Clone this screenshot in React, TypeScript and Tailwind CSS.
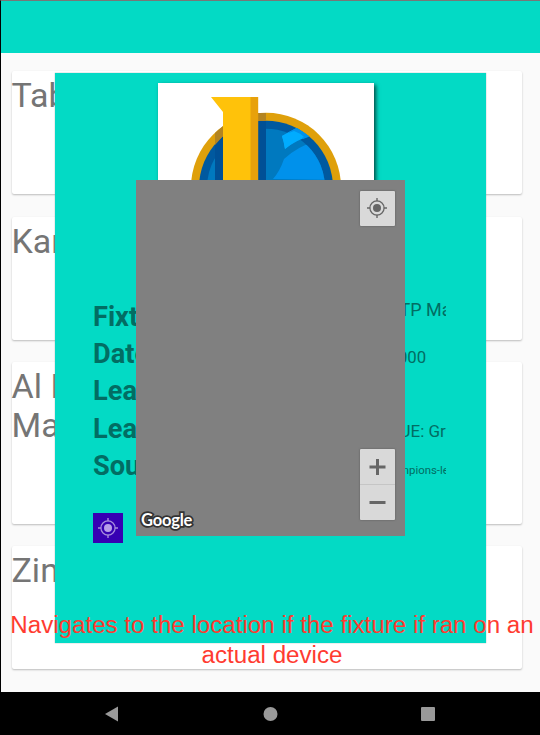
import React from "react";

const cards = [
  { title: "Tab", height: "h-[123px]" },
  { title: "Kara", height: "h-[123px]" },
  { title: "Al Hilal\nMadrid", height: "h-[161.5px]" },
  { title: "Zinda", height: "h-[123px]" },
];

const rows = [
  { label: "Fixture", value: "TP Maz", style: "text-[18px] pb-[15px] pl-[1.5px]" },
  { label: "Date", value: "2000", style: "text-[16.8px] pt-[4px] -ml-[9.5px]" },
  { label: "League", value: "", style: "" },
  { label: "League", value: "UE: Gro", style: "text-[17px] pt-[4px] pl-[1.5px]" },
  { label: "Source", value: "mpions-league", style: "text-[11.4px] pt-[8px] pl-[1px]" },
];

function Target({ ring, dot }: { ring: string; dot: string }) {
  return (
    <svg width="22" height="22" viewBox="0 0 22 22" fill="none">
      <circle cx="11" cy="11" r="7.1" stroke={ring} strokeWidth="1.25" />
      <path d="M11 1v3.2M11 17.8V21M1 11h3.2M17.8 11H21" stroke={ring} strokeWidth="1.4" />
      <circle cx="11" cy="11" r="4" fill={dot} />
    </svg>
  );
}

function Emblem() {
  return (
    <svg width="216" height="97" viewBox="158 83 216 97" className="block">
      <defs>
        <clipPath id="ball"><circle cx="266" cy="187.7" r="67" /></clipPath>
        <clipPath id="core"><circle cx="266" cy="187.7" r="59" /></clipPath>
      </defs>
      <circle cx="266" cy="187.7" r="75" fill="#dfa00b" />
      <g clipPath="url(#ball)">
        <path d="M190 110h152v90H190z" fill="#00599f" />
        <circle cx="266" cy="187.7" r="59" fill="#0079bf" />
        <path clipPath="url(#core)" d="M273 179q7-8 11-20 14-13 31-17l20 38z" fill="#0091eb" />
        <path d="M282 136q8-5 15-8l13 8q-14 4-25 13-1-7-3-13z" fill="#00acff" />
        <path d="M288 133q6-4 10-6l13 9-8 3q-6-5-15-6z" fill="#0091eb" />
        <path d="M282 136q6-3 12-5 6 2 10 6-10 4-19 12-1-7-3-13z" fill="#00acff" />
      </g>
      <path clipPath="url(#ball)" d="M215 110h8v80h-8zM258 110h8v80h-8z" fill="#005096" />
      <path d="M215 133l8-7v10l-8 9zM258 113h8v8h-8z" fill="#b38421" />
      <path d="M211 97h47v84h-35v-69z" fill="#ffc20a" />
      <path d="M250.5 97h7.7v84h-7.7z" fill="#e8a10b" />
    </svg>
  );
}

function FixtureDialog() {
  return (
    <section className="absolute left-[55px] top-[73px] h-[570px] w-[431px] bg-[#03dac5] shadow-[0_0_1px_#8a9a98]">
      <div className="pt-[10px] pl-[103px]">
        <div className="h-[180px] w-[216px] bg-white shadow-[2px_2px_4px_rgba(0,0,0,.65)]">
          <Emblem />
        </div>
      </div>
      <div className="mt-[35.6px] ml-[38px] w-[353px] text-[#026d63]">
        {rows.map((row, i) => (
          <div key={i} className="flex h-[37.3px] items-center overflow-hidden">
            <b className="w-[305px] shrink-0 text-[27.2px] leading-[37px]">{row.label}</b>
            <span className={`shrink-0 whitespace-nowrap leading-[20px] ${row.style}`}>{row.value}</span>
          </div>
        ))}
      </div>
      <button className="mt-[27.9px] ml-[38px] flex h-[30px] w-[30px] items-center justify-center bg-[#3700b3]">
        <Target ring="#a78cdc" dot="#b79de8" />
      </button>
    </section>
  );
}

function MapPanel() {
  return (
    <section className="absolute left-[136px] top-[180px] flex h-[356px] w-[269px] flex-col justify-between bg-[#808080] pt-[10.5px]">
      <button className="mr-[10.5px] flex h-[35px] w-[35px] items-center justify-center self-end rounded-[1px] bg-[#d9d9d9] shadow-[0_0_2px_#555]">
        <Target ring="#666" dot="#666" />
      </button>
      <div className="flex items-end justify-between pr-[10.5px] pb-[16.5px]">
        <span className="-mb-[11px] ml-[5px] text-[16.5px] leading-[22px] font-bold tracking-[-0.2px] text-white [paint-order:stroke_fill] [-webkit-text-stroke:3.5px_#333] [font-family:Lato,sans-serif]">Google</span>
        <div className="h-[71px] w-[35px] rounded-[1px] bg-[#d9d9d9] shadow-[0_0_2px_#555]">
          <svg width="35" height="71" viewBox="0 0 35 71">
            <path d="M9.5 18h16M17.5 10v16M9.5 53.5h16" stroke="#666" strokeWidth="3" />
            <path d="M0 35.5h35" stroke="#c5c5c5" />
          </svg>
        </div>
      </div>
    </section>
  );
}

export default function App() {
  return (
    <main className="relative flex h-[735px] w-[540px] flex-col overflow-hidden bg-[#fafafa] [font-family:Roboto,sans-serif]">
      <header className="h-[53px] border-t border-l border-t-[#777] border-l-black bg-[#03dac5]" />
      <div className="flex h-[639px] flex-col gap-[22.5px] border-l border-black pt-[18.3px] pr-[18px] pl-[10.5px]">
        {cards.map((card) => (
          <article key={card.title} className={`${card.height} shrink-0 rounded-[2px] bg-white pt-[5px] shadow-[0_1px_2px_rgba(0,0,0,.25)]`}>
            <h2 className="text-[34px] leading-[39px] whitespace-pre text-[#757575]">{card.title}</h2>
          </article>
        ))}
      </div>
      <nav className="flex h-[43px] items-center bg-black">
        <svg width="540" height="43" viewBox="0 0 540 43" fill="#999">
          <path d="M105 22l13-7.5v15z" />
          <circle cx="270.5" cy="22" r="7" />
          <rect x="421" y="15" width="14" height="14" rx="1" />
        </svg>
      </nav>
      <FixtureDialog />
      <MapPanel />
      <p className="absolute left-0 top-[609.5px] w-[544px] text-center text-[24.15px] leading-[30px] whitespace-nowrap text-[#ff3b30] [font-family:'Liberation_Sans',sans-serif]">
        Navigates to the location if the fixture if ran on an<br />actual device
      </p>
    </main>
  );
}
